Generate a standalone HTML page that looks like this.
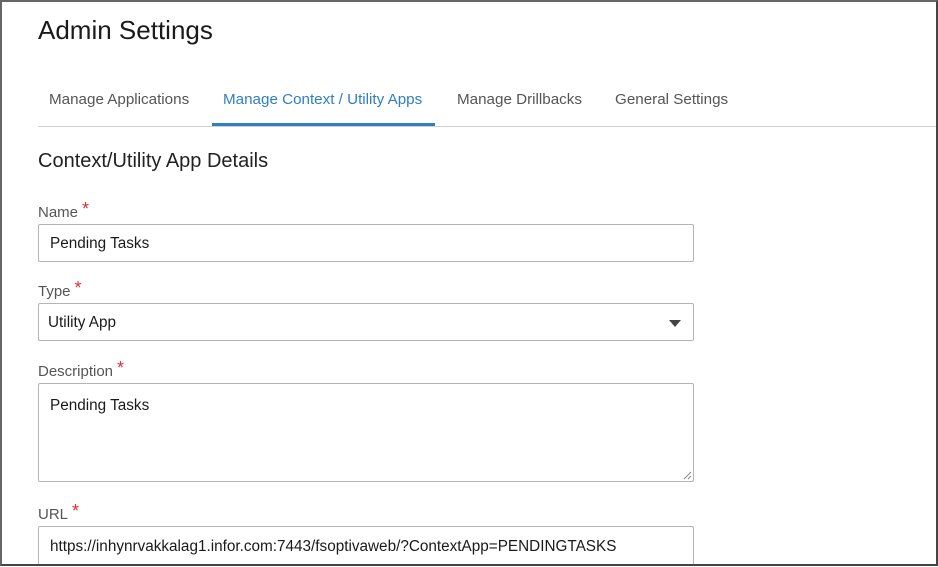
<!DOCTYPE html>
<html><head><style>
*{box-sizing:border-box;margin:0;padding:0}
body{width:938px;height:566px;overflow:hidden;background:#fff;font-family:"Liberation Sans",Arial,sans-serif;position:relative}
.frame{position:absolute;left:0;top:0;width:938px;height:566px;border:2px solid #444;border-top-color:#666;border-left-color:#666}
.abs{position:absolute;white-space:nowrap}
.h1{left:38px;top:15px;font-size:26px;color:#1a1a1a}
.tab{top:91px;font-size:15.2px;color:#555}
.sep{left:38px;top:126px;width:898px;height:1px;background:#d0d0d0}
.act{left:212px;top:123px;width:223px;height:3px;background:#2f7fc1}
.h2{left:38px;top:150px;font-size:20px;color:#222}
.lbl{left:38px;font-size:15px;color:#555}
.lbl b{color:#e03030;font-weight:normal;margin-left:4px;font-size:18px;position:relative;top:-2px}
.inp{left:38px;width:656px;border:1px solid #b5b5b5;border-radius:2px;font-size:15.3px;color:#1a1a1a;padding-left:11px}
</style></head><body>
<div class="abs h1">Admin Settings</div>
<div class="abs tab" style="left:49px">Manage Applications</div>
<div class="abs tab" style="left:223px;color:#2f7fc1">Manage Context / Utility Apps</div>
<div class="abs tab" style="left:457px">Manage Drillbacks</div>
<div class="abs tab" style="left:615px">General Settings</div>
<div class="abs sep"></div>
<div class="abs act"></div>
<div class="abs h2">Context/Utility App Details</div>
<div class="abs lbl" style="top:201px">Name<b>*</b></div>
<div class="abs inp" style="top:224px;height:38px;line-height:38px">Pending Tasks</div>
<div class="abs lbl" style="top:280px">Type<b>*</b></div>
<div class="abs inp" style="top:303px;height:38px;line-height:38px;padding-left:9px">Utility App
<svg style="position:absolute;right:12px;top:16px" width="12" height="7"><path d="M0 0H12L6 7Z" fill="#444"/></svg></div>
<div class="abs lbl" style="top:360px">Description<b>*</b></div>
<div class="abs inp" style="top:383px;height:99px;padding-top:13px">Pending Tasks
<svg style="position:absolute;right:1px;bottom:1px" width="10" height="10"><path d="M9 2L2 9M9 6L6 9" stroke="#888" stroke-width="1"/></svg></div>
<div class="abs lbl" style="top:503px">URL<b>*</b></div>
<div class="abs inp" style="top:526px;height:40px;line-height:40px">https://inhynrvakkalag1.infor.com:7443/fsoptivaweb/?ContextApp=PENDINGTASKS</div>
<div class="frame"></div>
</body></html>
